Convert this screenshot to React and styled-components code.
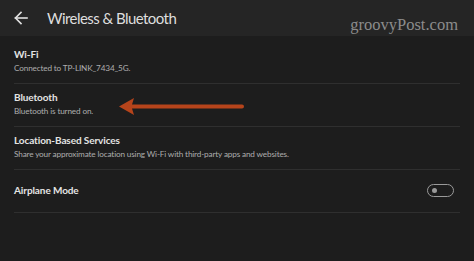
import React from "react";
import styled, { createGlobalStyle } from "styled-components";

const Global = createGlobalStyle`
  html, body { margin: 0; padding: 0; background: #1d1d1d; }
  body { font-family: Lato, "Open Sans", sans-serif; }
`;

const Screen = styled.div`
  position: relative;
  width: 474px;
  height: 261px;
  background: #1d1d1d;
  overflow: hidden;
`;

const Header = styled.div`
  height: 36px;
  background: #252525;
  display: flex;
  align-items: center;
  padding: 0 16px 0 14px;
  box-sizing: border-box;
`;

const Back = styled.div`
  width: 14px;
  height: 14px;
  display: flex;
  margin-right: 19px;
  margin-top: -1px;
`;

const Title = styled.div`
  color: #dedede;
  font-size: 15px;
  font-weight: 400;
  letter-spacing: -0.55px;
  flex: 1;
  margin-top: -1px;
`;

const Watermark = styled.div`
  font-family: "Liberation Serif", "DejaVu Serif", serif;
  font-size: 16.5px;
  color: #8c8c8c;
  margin-top: 13px;
`;

const List = styled.div`
  padding: 5px 14px 0 14px;
`;

const Row = styled.div`
  height: 43px;
  box-sizing: border-box;
  border-bottom: 1px solid #2f2f2f;
  display: flex;
  align-items: ${(p) => (p.$single ? "center" : "flex-start")};
  justify-content: space-between;
  padding-top: ${(p) => (p.$single ? "0" : "6px")};
  padding-bottom: ${(p) => (p.$single ? "2px" : "0")};
`;

const Texts = styled.div`
  display: flex;
  flex-direction: column;
`;

const RowTitle = styled.div`
  color: #e4e4e4;
  font-size: 10px;
  font-weight: 700;
  letter-spacing: -0.1px;
  line-height: 14px;
`;

const RowSub = styled.div`
  color: #adadad;
  font-size: 8.2px;
  letter-spacing: -0.15px;
  line-height: 14px;
`;

const Toggle = styled.div`
  width: 27px;
  height: 13px;
  border: 1.5px solid #9a9a9a;
  border-radius: 8px;
  box-sizing: border-box;
  display: flex;
  align-items: center;
  padding-left: 4px;
  margin-right: 6px;
  margin-bottom: -1px;
`;

const Knob = styled.div`
  width: 5px;
  height: 5px;
  border-radius: 50%;
  background: #9a9a9a;
`;

const Pointer = styled.svg`
  position: absolute;
  left: 118px;
  top: 96px;
`;

const rows = [
  { t: "Wi-Fi", s: "Connected to TP-LINK_7434_5G." },
  { t: "Bluetooth", s: "Bluetooth is turned on." },
  { t: "Location-Based Services", s: "Share your approximate location using Wi-Fi with third-party apps and websites." },
];

export default function App() {
  return (
    <Screen>
      <Global />
      <Header>
        <Back>
          <svg width="14" height="14" viewBox="0 0 14 14" fill="none" stroke="#e0e0e0" strokeWidth="1.6" strokeLinecap="square">
            <path d="M1.5 7 H13" />
            <path d="M7 1.5 L1.5 7 L7 12.5" />
          </svg>
        </Back>
        <Title>Wireless &amp; Bluetooth</Title>
        <Watermark>groovyPost.com</Watermark>
      </Header>
      <List>
        {rows.map((r) => (
          <Row key={r.t}>
            <Texts>
              <RowTitle>{r.t}</RowTitle>
              <RowSub>{r.s}</RowSub>
            </Texts>
          </Row>
        ))}
        <Row $single>
          <RowTitle>Airplane Mode</RowTitle>
          <Toggle>
            <Knob />
          </Toggle>
        </Row>
      </List>
      <Pointer width="130" height="20" viewBox="0 0 130 20">
        <path d="M1 10.5 L16 2 L14 8.5 L124 8.5 A2 2 0 0 1 124 12.5 L14 12.5 L16 19 Z" fill="#b6441b" />
      </Pointer>
    </Screen>
  );
}
